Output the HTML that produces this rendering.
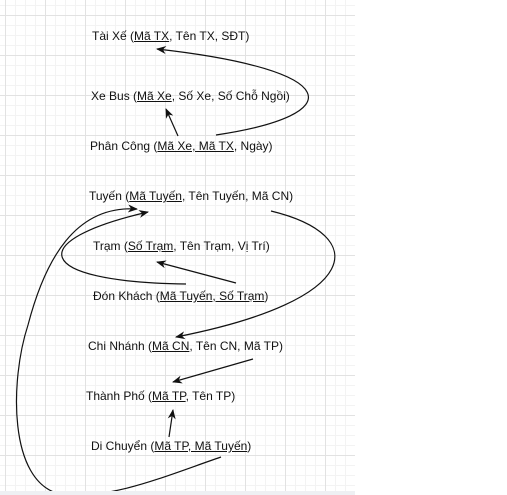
<!DOCTYPE html>
<html><head><meta charset="utf-8"><style>
body{margin:0;width:507px;height:495px;overflow:hidden;background:#fff;font-family:"Liberation Sans",Arial,sans-serif;}
.g{position:absolute;left:0;top:0;width:355px;height:491px;
background-color:#fff;
background-image:
linear-gradient(to right,#e2e2e2 1px,transparent 1px),
linear-gradient(to bottom,#e2e2e2 1px,transparent 1px),
linear-gradient(to right,#f3f3f3 1px,transparent 1px),
linear-gradient(to bottom,#f3f3f3 1px,transparent 1px);
background-size:40px 40px,40px 40px,10px 10px,10px 10px;
background-position:5px 15px,5px 15px,5px 15px,5px 15px;}
.bar{position:absolute;left:0;top:491px;width:355px;height:4px;background:#eef0f3;}
.t{position:absolute;font-size:12px;color:#111;white-space:nowrap;line-height:14px;}
u{text-decoration:underline;}
svg{position:absolute;left:0;top:0;}
</style></head><body>
<div class="g"></div>
<svg width="507" height="491" viewBox="0 0 507 491">
<defs><marker id="a" markerWidth="10" markerHeight="8" refX="9" refY="4" orient="auto" markerUnits="userSpaceOnUse"><path d="M0,0 L10,4 L0,8 L3,4 Z" fill="#111"/></marker></defs>
<g fill="none" stroke="#111" stroke-width="1.2" marker-end="url(#a)">
<path d="M216,135 C350,115 345,70 157,49"/>
<path d="M178,136 L166,109"/>
<path d="M271,211 C370,235 365,300 176,337"/>
<path d="M236,283 L157,262"/>
<path d="M186,284 C30,282 25,240 148,212"/>
<path d="M221,457 C160,478 110,500 60,494 C8,482 10,380 28,325 C45,260 75,205 137,209"/>
<path d="M253,359 L173,382"/>
<path d="M169,437 L173,410"/>
</g>
</svg>
<div class="bar"></div>
<div class="t" style="left:92px;top:29px">Tài Xế (<u>Mã TX</u>, Tên TX, SĐT)</div>
<div class="t" style="left:91px;top:89px">Xe Bus (<u>Mã Xe</u>, Số Xe, Số Chỗ Ngồi)</div>
<div class="t" style="left:90px;top:139px">Phân Công (<u>Mã Xe, Mã TX</u>, Ngày)</div>
<div class="t" style="left:89px;top:189px">Tuyến (<u>Mã Tuyến</u>, Tên Tuyến, Mã CN)</div>
<div class="t" style="left:93px;top:239px">Trạm (<u>Số Trạm</u>, Tên Trạm, Vị Trí)</div>
<div class="t" style="left:93px;top:289px">Đón Khách (<u>Mã Tuyến, Số Trạm</u>)</div>
<div class="t" style="left:88px;top:339px">Chi Nhánh (<u>Mã CN</u>, Tên CN, Mã TP)</div>
<div class="t" style="left:86px;top:389px">Thành Phố (<u>Mã TP</u>, Tên TP)</div>
<div class="t" style="left:91px;top:439px">Di Chuyển (<u>Mã TP, Mã Tuyến</u>)</div>
</body></html>
